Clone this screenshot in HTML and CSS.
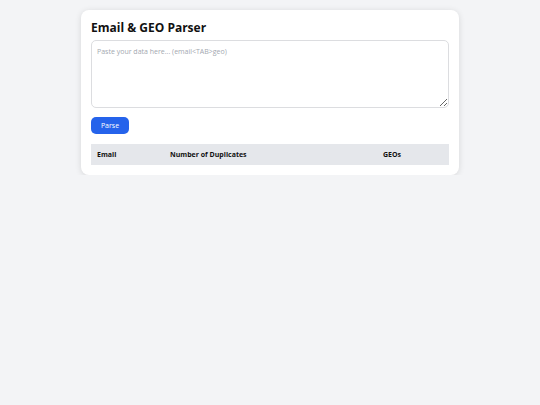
FILE: index.html
```
<!DOCTYPE html>
<html>
<head>
<meta charset="utf-8">
<link rel="stylesheet" href="styles.css">
</head>
<body>
<div class="card">
  <h1 class="title">Email &amp; GEO Parser</h1>
  <textarea class="input" placeholder="Paste your data here... (email<TAB>geo)"></textarea>
  <button class="btn">Parse</button>
  <table class="results">
    <thead>
      <tr>
        <th class="c-email">Email</th>
        <th class="c-dup">Number of Duplicates</th>
        <th class="c-geo">GEOs</th>
      </tr>
    </thead>
    <tbody></tbody>
  </table>
</div>
</body>
</html>
```
FILE: styles.css
```
html, body {
  margin: 0;
  padding: 0;
}
body {
  background: #f3f4f6;
  font-family: "Open Sans", "Noto Sans", sans-serif;
  color: #111;
  padding-top: 10px;
}
.card {
  width: 358px;
  margin: 0 auto;
  background: #fff;
  border-radius: 8px;
  padding: 10px;
  box-shadow: 0 1px 6px rgba(0,0,0,0.12);
}
.title {
  margin: 0 0 4px 0;
  font-size: 12px;
  line-height: 16px;
  font-weight: 700;
  color: #111;
}
.input {
  display: block;
  box-sizing: border-box;
  width: 100%;
  height: 68px;
  margin: 0;
  padding: 6px 5px;
  border: 1px solid #dcdde0;
  border-radius: 5px;
  font-family: "Open Sans", "Noto Sans", sans-serif;
  font-size: 7px;
  line-height: 10px;
  resize: vertical;
}
.input::placeholder {
  color: #a3a8b0;
}
.btn {
  display: block;
  margin: 9px 0 10px 0;
  width: 38px;
  height: 17px;
  padding: 0;
  border: none;
  border-radius: 5px;
  background: #2563eb;
  color: #fff;
  font-family: "Open Sans", "Noto Sans", sans-serif;
  font-size: 7px;
}
.results {
  width: 100%;
  border-collapse: collapse;
}
.results th {
  background: #e5e7eb;
  text-align: left;
  font-size: 7px;
  font-weight: 700;
  height: 21px;
  padding: 0 6px;
  box-sizing: border-box;
}
.c-email { width: 73px; }
.c-dup { width: 213px; }
```
